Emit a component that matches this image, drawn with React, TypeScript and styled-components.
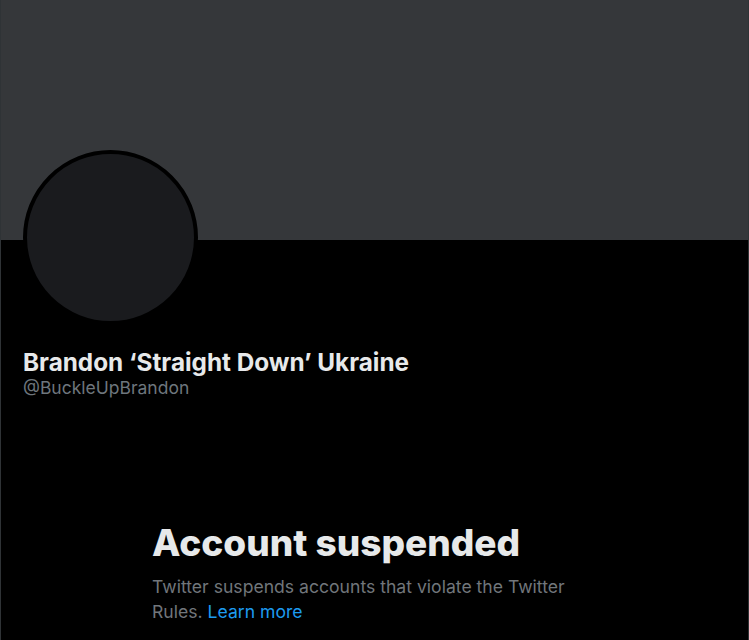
import React from "react";
import styled, { createGlobalStyle } from "styled-components";

const Global = createGlobalStyle`
  html, body { margin: 0; padding: 0; background: #000; }
  body { font-family: Inter, "Liberation Sans", Arial, sans-serif; }
`;

const Page = styled.div`
  box-sizing: border-box;
  width: 749px;
  height: 640px;
  overflow: hidden;
  background: #000;
  border-left: 1px solid #2f3336;
  border-right: 1px solid #2f3336;
  display: flex;
  flex-direction: column;
`;

const Banner = styled.div`
  height: 240px;
  background: #35373a;
  flex-shrink: 0;
`;

const Profile = styled.div`
  padding: 0 22px;
  display: flex;
  flex-direction: column;
`;

const Avatar = styled.div`
  box-sizing: border-box;
  width: 175px;
  height: 175px;
  margin-top: -90px;
  border-radius: 50%;
  border: 4px solid #000;
  background: #1a1b1e;
`;

const Name = styled.h1`
  margin: 23px 0 0;
  font-size: 24.3px;
  line-height: 28px;
  font-weight: 700;
  color: #e7e9ea;
`;

const Handle = styled.div`
  margin-top: 1px;
  font-size: 17.5px;
  line-height: 22px;
  color: #6e767d;
`;

const Notice = styled.div`
  padding: 123px 0 0 151px;
  display: flex;
  flex-direction: column;
`;

const Title = styled.h2`
  margin: 0;
  font-size: 37px;
  line-height: 42px;
  font-weight: 800;
  color: #e7e9ea;
`;

const Text = styled.p`
  margin: 10px 0 0;
  width: 430px;
  font-size: 17.6px;
  line-height: 25px;
  color: #71767b;
`;

const Link = styled.a`
  color: #1d9bf0;
  text-decoration: none;
`;

export default function App() {
  return (
    <>
      <Global />
      <Page>
        <Banner />
        <Profile>
          <Avatar />
          <Name>Brandon ‘Straight Down’ Ukraine</Name>
          <Handle>@BuckleUpBrandon</Handle>
        </Profile>
        <Notice>
          <Title>Account suspended</Title>
          <Text>
            Twitter suspends accounts that violate the Twitter Rules.{" "}
            <Link href="#">Learn more</Link>
          </Text>
        </Notice>
      </Page>
    </>
  );
}
